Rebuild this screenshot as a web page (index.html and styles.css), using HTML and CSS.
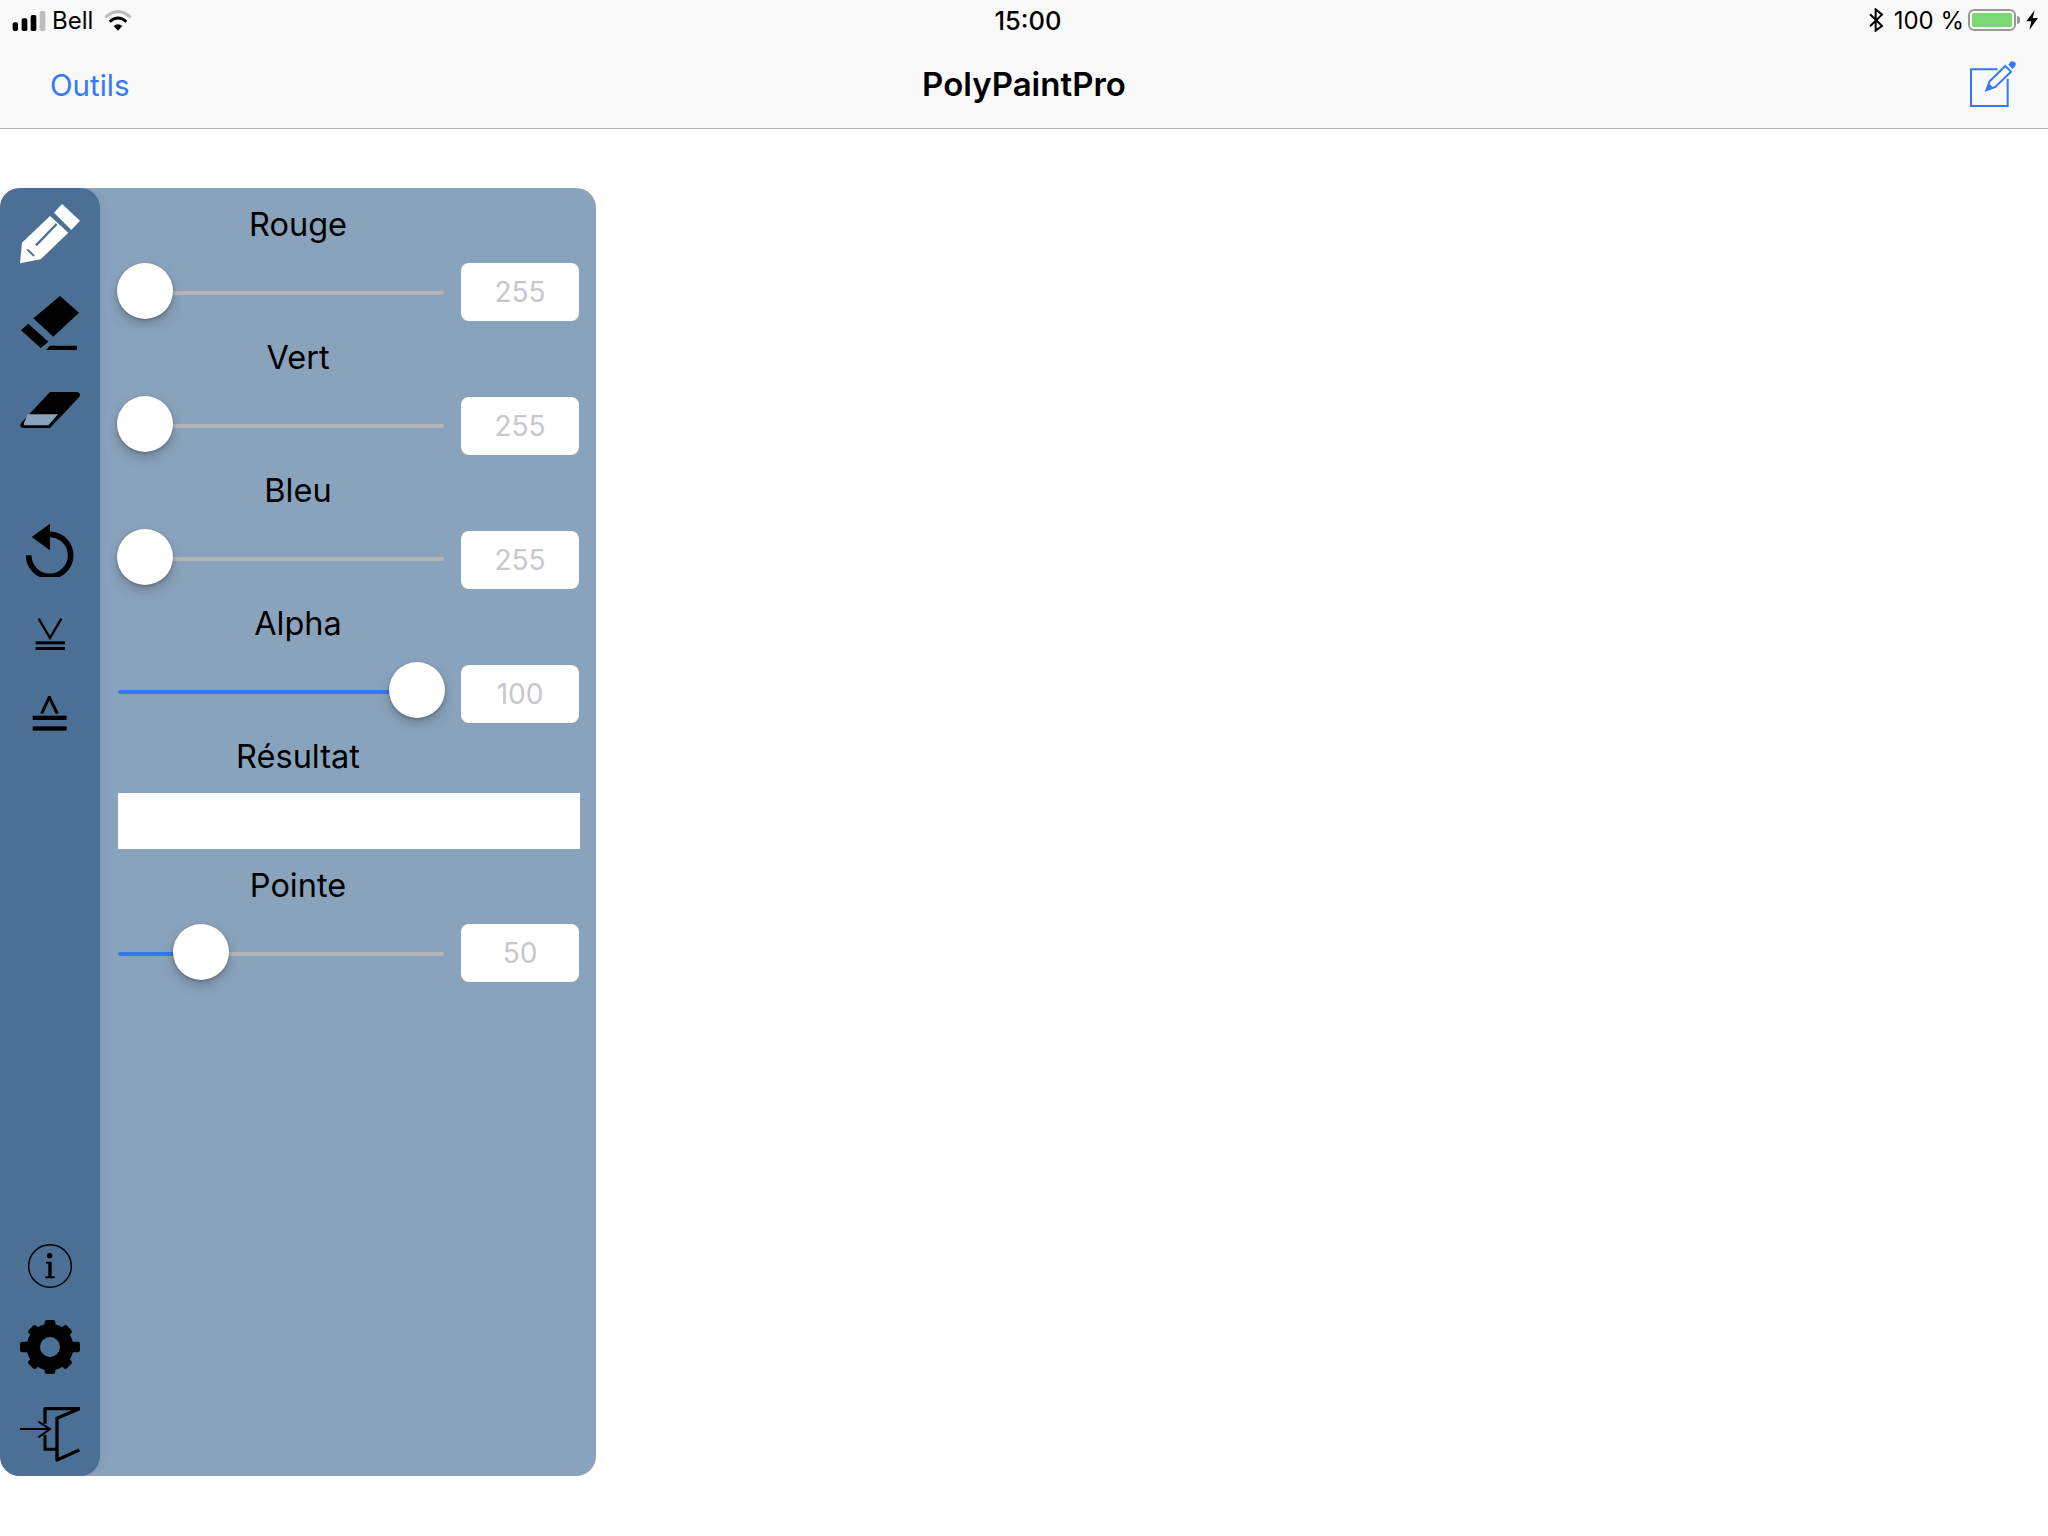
FILE: index.html
```html
<!DOCTYPE html>
<html lang="fr">
<head>
    <meta charset="UTF-8">
    <meta name="viewport" content="width=device-width, initial-scale=1.0">
    <title>PolyPaintPro</title>
    <link rel="stylesheet" href="styles.css">
</head>
<body>
    <header class="top-bar">
        <div class="status-bar">
            <div class="status-left">
                <svg class="signal" width="34" height="22" viewBox="36 24 98 66">
                    <rect x="36" y="64" width="16" height="26" rx="6" fill="#000"/>
                    <rect x="63" y="52" width="17" height="38" rx="5" fill="#000"/>
                    <rect x="90" y="42" width="17" height="48" rx="5" fill="#000"/>
                    <rect x="117" y="30" width="17" height="60" rx="5" fill="#bdbdbd"/>
                </svg>
                <span>Bell</span>
                <svg class="wifi" width="28" height="21" viewBox="315 28 84 63">
                    <path d="M319 50 Q357 16 395 50" fill="none" stroke="#bdbdbd" stroke-width="9"/>
                    <path d="M332 63 Q357 41 382 63" fill="none" stroke="#000" stroke-width="8"/>
                    <path d="M344 76 Q357 66 370 76 L357 90 Z" fill="#000"/>
                </svg>
            </div>
            <div class="status-time">15:00</div>
            <div class="status-right">
                <svg class="bluetooth" width="16" height="24" viewBox="262 24 48 72">
                    <path d="M268 43 L304 78 L285 92 V28 L304 44 L268 79" fill="none" stroke="#000" stroke-width="6"/>
                </svg>
                <span>100 %</span>
                <div class="battery"><div class="battery-level"></div></div>
                <div class="battery-nub"></div>
                <svg class="bolt" width="12" height="20" viewBox="740 30 36 60">
                    <path d="M766 30 L741 64 H756 L750 90 L776 54 H760 Z" fill="#000"/>
                </svg>
            </div>
        </div>
        <nav class="nav-bar">
            <a class="nav-link">Outils</a>
            <div class="nav-title">PolyPaintPro</div>
            <div class="nav-action">
                <svg width="48" height="48" viewBox="566 178 144 144">
                    <path d="M652 206 H572 V316 H682 V234" fill="none" stroke="#3478f6" stroke-width="6"/>
                    <path d="M628 242 L675 196 L692 213 L645 259 L618 269 Z" fill="none" stroke="#3478f6" stroke-width="6"/>
                    <path d="M617 270 L625 248 L640 262 Z" fill="#3478f6"/>
                    <path d="M684 192 L692 182 Q700 180 706 187 Q708 194 702 200 L696 205 Z" fill="#3478f6"/>
                </svg>
            </div>
        </nav>
    </header>

    <main class="tool-panel">
        <aside class="rail">
            <svg class="icon icon-pencil" width="60" height="60" viewBox="60 72 180 180">
                <path d="M162 98 L186 72 L240 122 L214 150 Z" fill="#fff"/>
                <path d="M66 188 L150 108 L205 158 L122 238 L60 250 Z" fill="#fff"/>
                <path d="M108 196 L170 132" stroke="#4c7095" stroke-width="7" fill="none"/>
                <path d="M82 208 L102 228" stroke="#4c7095" stroke-width="6" fill="none"/>
            </svg>
            <svg class="icon icon-eraser" width="60" height="56" viewBox="60 345 180 168">
                <path d="M100 415 L180 348 L237 398 L160 470 Z" fill="#000"/>
                <path d="M63 451 L85 431 L145 485 L122 504 Z" fill="#000"/>
                <path d="M138 510 L150 497 H231 V510 Z" fill="#000"/>
            </svg>
            <svg class="icon icon-rubber" width="60" height="40" viewBox="60 630 180 114">
                <path d="M150 633 H228 Q244 633 238 648 L150 741 H72 Q56 741 63 726 Z" fill="#000"/>
                <path d="M83 700 H174 L145 733 H76 Q70 733 72 726 Z" fill="#8aa3bc"/>
            </svg>
            <svg class="icon icon-undo" width="50" height="54" viewBox="75 68 150 162">
                <path d="M86 165 A63 63 0 1 0 150 102" fill="none" stroke="#000" stroke-width="17"/>
                <path d="M95 110 L150 70 V150 Z" fill="#000"/>
            </svg>
            <svg class="icon icon-send-back" width="30" height="33" viewBox="105 354 90 99">
                <path d="M116 356 L150 414 L184 356" fill="none" stroke="#000" stroke-width="7"/>
                <rect x="107" y="424" width="88" height="9" fill="#000"/>
                <rect x="107" y="441" width="88" height="9" fill="#000"/>
            </svg>
            <svg class="icon icon-bring-front" width="36" height="36" viewBox="96 588 108 108">
                <path d="M125 641 L148 591 L172 641" fill="none" stroke="#000" stroke-width="9"/>
                <rect x="98" y="647" width="102" height="13" fill="#000"/>
                <rect x="98" y="679" width="102" height="13" fill="#000"/>
            </svg>
            <svg class="icon icon-info" width="46" height="46" viewBox="81 68 138 138">
                <circle cx="150" cy="137" r="64" fill="none" stroke="#000" stroke-width="4.5"/>
                <circle cx="149" cy="106" r="8" fill="#000"/>
                <path d="M138 124 H155 V168 H164 V174 H136 V168 H145 V130 H138 Z" fill="#000"/>
            </svg>
            <svg class="icon icon-gear" width="60" height="60" viewBox="60 290 180 180">
                <circle cx="150" cy="380" r="50" fill="none" stroke="#000" stroke-width="40"/>
                <g fill="#000">
                    <rect x="134" y="299" width="32" height="34" rx="7"/>
                    <rect x="134" y="427" width="32" height="34" rx="7"/>
                    <rect x="60" y="364" width="34" height="32" rx="7"/>
                    <rect x="206" y="364" width="34" height="32" rx="7"/>
                    <rect x="134" y="299" width="32" height="34" rx="7" transform="rotate(45 150 380)"/>
                    <rect x="134" y="299" width="32" height="34" rx="7" transform="rotate(135 150 380)"/>
                    <rect x="134" y="299" width="32" height="34" rx="7" transform="rotate(225 150 380)"/>
                    <rect x="134" y="299" width="32" height="34" rx="7" transform="rotate(315 150 380)"/>
                </g>
            </svg>
            <svg class="icon icon-exit" width="60" height="56" viewBox="60 556 180 168">
                <path d="M135 606 V561 H238 L171 590 V715 L238 685" fill="none" stroke="#000" stroke-width="10" stroke-linejoin="round"/>
                <path d="M135 640 V683 H170" fill="none" stroke="#000" stroke-width="9"/>
                <path d="M60 622 H148 M115 600 L150 622 L115 647" fill="none" stroke="#000" stroke-width="6"/>
            </svg>
        </aside>

        <section class="controls">
            <div class="field-label">Rouge</div>
            <div class="slider-row">
                <div class="slider">
                    <div class="track"><div class="track-fill" style="width: 0px"></div></div>
                    <div class="thumb" style="left: 0px"></div>
                </div>
                <div class="value-box">255</div>
            </div>

            <div class="field-label up-1">Vert</div>
            <div class="slider-row">
                <div class="slider up-1">
                    <div class="track"><div class="track-fill" style="width: 0px"></div></div>
                    <div class="thumb" style="left: 0px"></div>
                </div>
                <div class="value-box">255</div>
            </div>

            <div class="field-label up-2">Bleu</div>
            <div class="slider-row">
                <div class="slider up-2">
                    <div class="track"><div class="track-fill" style="width: 0px"></div></div>
                    <div class="thumb" style="left: 0px"></div>
                </div>
                <div class="value-box">255</div>
            </div>

            <div class="field-label up-3">Alpha</div>
            <div class="slider-row">
                <div class="slider up-3">
                    <div class="track"><div class="track-fill" style="width: 290px"></div></div>
                    <div class="thumb" style="left: 272px"></div>
                </div>
                <div class="value-box">100</div>
            </div>

            <div class="field-label label-result">Résultat</div>
            <div class="result-box"></div>

            <div class="field-label">Pointe</div>
            <div class="slider-row">
                <div class="slider">
                    <div class="track"><div class="track-fill" style="width: 70px"></div></div>
                    <div class="thumb" style="left: 56px"></div>
                </div>
                <div class="value-box">50</div>
            </div>
        </section>
    </main>
</body>
</html>
```

FILE: styles.css
```css
/* Page */
body {
    margin: 0;
    background: #fff;
    color: #000;
    font-family: Inter, "Noto Sans", sans-serif;
}

/* Top bar */
.top-bar {
    background: #f9f9f9;
    border-bottom: 1px solid #b2b2b2;
}

.status-bar {
    height: 40px;
    padding: 0 10px 0 12px;
    display: grid;
    grid-template-columns: 1fr auto 1fr;
    align-items: center;
    font-size: 24px;
}

.status-left {
    display: flex;
    align-items: center;
    gap: 6px;
}

.wifi {
    margin-left: 5px;
}

.status-time {
    margin-left: 6px;
    font-size: 25.5px;
    font-weight: 500;
}

.status-right {
    display: flex;
    align-items: center;
    justify-content: flex-end;
}

.bluetooth {
    margin-right: 10px;
}

.battery {
    width: 48px;
    height: 22px;
    margin-left: 4px;
    padding: 2px;
    box-sizing: border-box;
    border: 2px solid #999;
    border-radius: 6px;
}

.battery-level {
    height: 100%;
    background: #7ad974;
    border-radius: 2px;
}

.battery-nub {
    width: 3px;
    height: 8px;
    margin-left: 1px;
    background: #999;
    border-radius: 0 3px 3px 0;
}

.bolt {
    margin-left: 6px;
}

.nav-bar {
    height: 88px;
    display: grid;
    grid-template-columns: 1fr auto 1fr;
    align-items: center;
}

.nav-link {
    margin-left: 50px;
    padding-top: 2px;
    color: #3478f6;
    font-size: 29.5px;
}

.nav-title {
    font-size: 33px;
    font-weight: 600;
}

.nav-action {
    margin-right: 31px;
    display: flex;
    justify-content: flex-end;
}

/* Tool panel */
.tool-panel {
    width: 596px;
    height: 1288px;
    margin-top: 59px;
    display: flex;
    background: #8aa3bc;
    border-radius: 20px;
}

.rail {
    width: 100px;
    padding: 16px 0 13px;
    box-sizing: border-box;
    display: flex;
    flex-direction: column;
    align-items: center;
    background: #4c7095;
    border-radius: 20px;
    box-shadow: 2px 0 6px rgba(0, 0, 0, 0.06);
}

.icon {
    display: block;
    flex: none;
}

.icon-eraser {
    margin-top: 31px;
}

.icon-rubber {
    margin-top: 39px;
}

.icon-undo {
    margin-top: 93px;
}

.icon-send-back {
    margin-top: 41px;
}

.icon-bring-front {
    margin-top: 45px;
}

.icon-info {
    margin-top: auto;
}

.icon-gear {
    margin-top: 28px;
}

.icon-exit {
    margin-top: 30px;
}

/* Controls */
.controls {
    width: 462px;
    margin-left: 18px;
}

.field-label {
    width: 396px;
    height: 75px;
    margin-left: -18px;
    line-height: 74px;
    text-align: center;
    font-size: 32.5px;
}

.field-label.up-1 {
    line-height: 72px;
}

.field-label.up-2 {
    line-height: 70px;
}

.field-label.up-3 {
    line-height: 68px;
}

.field-label.label-result {
    height: 69px;
    line-height: 66px;
}

.slider-row {
    height: 59px;
    display: flex;
    align-items: flex-start;
    gap: 16px;
}

.slider {
    position: relative;
    width: 328px;
    height: 58px;
    margin-left: -1px;
}

.slider.up-1 {
    margin-top: -1px;
}

.slider.up-2 {
    margin-top: -2px;
}

.slider.up-3 {
    margin-top: -3px;
}

.track {
    position: absolute;
    left: 1px;
    right: 1px;
    top: 28px;
    height: 4px;
    background: #b5b5b5;
    border-radius: 2px;
}

.track-fill {
    height: 100%;
    background: #3478f6;
    border-radius: 2px;
}

.thumb {
    position: absolute;
    top: 0;
    width: 56px;
    height: 56px;
    background: #fff;
    border-radius: 50%;
    box-shadow: 0 6px 12px rgba(0, 0, 0, 0.2), 0 1px 3px rgba(0, 0, 0, 0.25);
}

.value-box {
    width: 118px;
    height: 58px;
    line-height: 58px;
    text-align: center;
    background: #fff;
    border-radius: 8px;
    color: #c7c7cd;
    font-size: 28px;
}

.result-box {
    width: 462px;
    height: 56px;
    background: #fff;
}
```
